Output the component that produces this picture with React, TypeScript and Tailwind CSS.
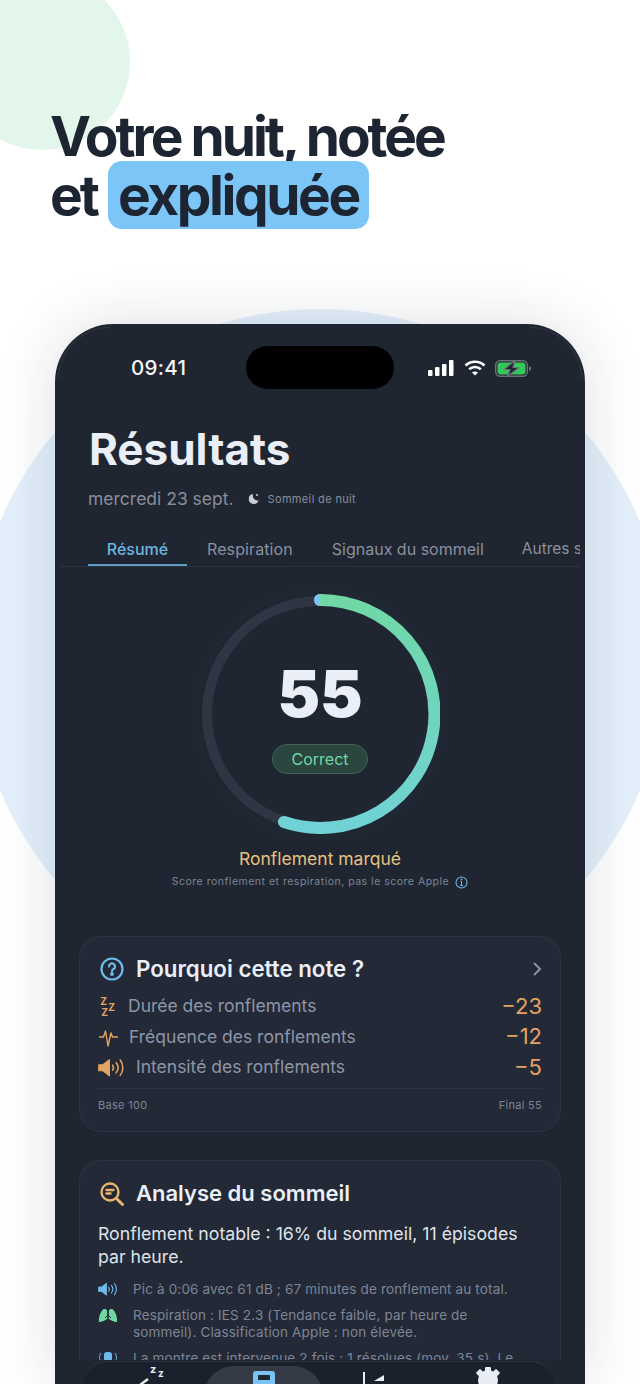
const font = "font-['Inter','Liberation_Sans',sans-serif]";

function CellBars() {
  return (
    <svg width="26" height="16" viewBox="0 0 26 16" fill="#fff">
      <rect x="0" y="10" width="4.5" height="6" rx="1" />
      <rect x="7" y="7" width="4.5" height="9" rx="1" />
      <rect x="14" y="4" width="4.5" height="12" rx="1" />
      <rect x="21" y="0" width="4.5" height="16" rx="1" />
    </svg>
  );
}

function WifiGlyph() {
  return (
    <svg width="22" height="16" viewBox="0 0 22 16" fill="none" stroke="#fff" strokeWidth="2.6">
      <path d="M1.5 5.5c5.400-5 13.600-5 19 0" />
      <path d="M5.200 9.200c3.300-3 8.300-3 11.600 0" />
      <path d="M11 15.600l-3-3c1.700-1.500 4.300-1.500 6 0z" fill="#fff" stroke="none" />
    </svg>
  );
}

function BatteryCharging() {
  return (
    <svg width="37" height="17" viewBox="0 0 37 17">
      <rect x="0.700" y="0.700" width="31.600" height="15.600" rx="4.500" fill="none" stroke="#6b7278" strokeWidth="1.400" />
      <rect x="2.500" y="2.500" width="28" height="12" rx="3" fill="#34c759" />
      <path d="M34 6v5c1.400-.4 2.200-1.400 2.200-2.500S35.400 6.400 34 6z" fill="#6b7278" />
      <path d="M20 0.500 9 9.500h6L12.500 16.500 24 7.500h-6z" fill="#1f2531" stroke="#6b7278" strokeWidth="1.200" strokeLinejoin="round" />
    </svg>
  );
}

function SpeakerWaves({ color, size }: { color: string; size: number }) {
  return (
    <svg width={size} height={size * 0.72} viewBox="0 0 26 19" fill="none">
      <path d="M0.500 6.500h4L11 1.500v16l-6.500-5h-4z" fill={color} stroke={color} strokeLinejoin="round" />
      <path d="M14 7c1.200 1.500 1.200 3.500 0 5M17.500 4.500c2.400 3 2.400 7 0 10M21.500 2c3.400 4.300 3.400 10.700 0 15" stroke={color} strokeWidth="1.500" strokeLinecap="round" />
    </svg>
  );
}

function ScoreRing() {
  return (
    <svg width="240" height="240" viewBox="0 0 240 240" className="block">
      <defs>
        <linearGradient id="arc" x1="0" y1="0" x2="0" y2="1">
          <stop offset="0" stopColor="#6fd8a5" />
          <stop offset="1" stopColor="#70d2d6" />
        </linearGradient>
      </defs>
      <circle cx="120" cy="120" r="113" fill="none" stroke="#2f3542" strokeWidth="10" />
      <path
        d="M120 6A114 114 0 1 1 84 228"
        fill="none"
        stroke="url(#arc)"
        strokeWidth="12"
        strokeLinecap="round"
      />
      <path d="M120 0A6 6 0 0 0 120 12z" fill="#7cc3f5" />
    </svg>
  );
}

function WhyRow({ icon, label, value, gap }: { icon: React.ReactNode; label: string; value: string; gap: string }) {
  return (
    <div className="flex h-[30.500px] items-center justify-between">
      <div className={`flex items-center ${gap}`}>
        {icon}
        <span className="text-[17.500px] text-[#8e96a6]">{label}</span>
      </div>
      <span className="text-[22px] text-[#e3a362]">{value}</span>
    </div>
  );
}

function NavIcons() {
  return (
    <div className="absolute bottom-0 left-[84px] h-[23px] w-[470px] overflow-hidden rounded-t-[34px] border-t border-[#2c3340] bg-[#1b212c]">
      <div className="absolute left-[120px] top-[4px] h-[40px] w-[119px] rounded-t-[30px] bg-[#343a46]" />
      <svg className="absolute left-[52px] top-[2px]" width="32" height="21" viewBox="0 0 32 21" fill="none">
        <path d="M4 21l8-6" stroke="#e8ecf4" strokeWidth="2.500" />
        <text x="14" y="9" fontSize="11" fontWeight="700" fill="#e8ecf4">z</text>
        <text x="22" y="13" fontSize="10" fontWeight="700" fill="#e8ecf4">z</text>
      </svg>
      <div className="absolute left-[169px] top-[9px] h-[20px] w-[22px] rounded-[3px] bg-[#7cc3f5]">
        <div className="mx-[5px] mt-[4px] h-[5px] rounded-[1px] bg-[#1f2531]" />
      </div>
      <div className="absolute left-[279px] top-[10px] h-[14px] w-[2px] bg-[#e8ecf4]" />
      <svg className="absolute left-[287px] top-[13px]" width="14" height="10" viewBox="0 0 14 10" fill="#e8ecf4">
        <path d="M13 0v6H3z" />
      </svg>
      <svg className="absolute left-[391px] top-[5px]" width="26" height="20" viewBox="0 0 26 20" fill="#e8ecf4">
        <circle cx="13" cy="13" r="10" />
        <rect x="10" y="0" width="6" height="6" rx="1" />
        <rect x="2" y="3" width="6" height="6" rx="1" transform="rotate(-45 5 6)" />
        <rect x="18" y="3" width="6" height="6" rx="1" transform="rotate(45 21 6)" />
      </svg>
    </div>
  );
}

export default function App() {
  return (
    <div className={`relative h-[1384px] w-[640px] overflow-hidden bg-white ${font}`}>
      <div className="absolute -left-[46px] -top-[26px] h-[176px] w-[176px] rounded-full bg-[#e2f6ec]" />
      <div className="absolute -left-[27px] top-[309px] h-[694px] w-[694px] rounded-full bg-[#e3f0fb]" />

      <div className="relative px-[50px] pt-[105px]">
        <h1 className="text-[55px] font-bold leading-[62px] tracking-[-3px] text-[#1d2432]">
          <div className="-mb-[6px]">Votre nuit, notée</div>
          <div className="flex items-center">
            et
            <span className="ml-[11px] inline-flex h-[68px] items-center rounded-[14px] bg-[#7cc6f7] px-[10px] tracking-[-2.400px]">expliquée</span>
          </div>
        </h1>
      </div>

      <div className="absolute left-[55px] top-[324px] h-[1060px] w-[530px] overflow-hidden rounded-t-[58px] bg-[#1f2531] shadow-[0_0_60px_rgba(20,30,50,0.14)]">
        {/* liseré du bord, visible seulement dans les coins */}
        <div className="absolute left-[3px] top-[3px] h-[52px] w-[52px] rounded-tl-[55px] border-l border-t border-[#2f3644]" />
        <div className="absolute right-[3px] top-[3px] h-[52px] w-[52px] rounded-tr-[55px] border-r border-t border-[#2f3644]" />

        <div className="relative flex h-[65px] items-end justify-between pb-[6px] pl-[76px] pr-[53px]">
          <span className="text-[20.500px] font-medium leading-[30px] tracking-[0.3px] text-[#f3f5f8]">09:41</span>
          <div className="absolute left-[191px] top-[22px] h-[43px] w-[148px] rounded-full bg-black" />
          <div className="flex h-[30px] items-center">
            <CellBars />
            <span className="ml-[10px]"><WifiGlyph /></span>
            <span className="ml-[9px]"><BatteryCharging /></span>
          </div>
        </div>

        <div className="pl-[34px]">
          <h2 className="mt-[32px] text-[44px] font-bold leading-[56px] text-[#e9eef7]">Résultats</h2>
          <div className="mt-[8px] flex h-[28px] items-center -translate-x-[1px]">
            <span className="text-[17.500px] text-[#878e9c]">mercredi 23 sept.</span>
            <svg className="ml-[12px]" width="14" height="14" viewBox="0 0 14 14" fill="#c9ced7">
              <path d="M7 2a5 5 0 1 0 5.500 6.500A5 5 0 0 1 7 2z" />
              <circle cx="11" cy="3" r="1" />
            </svg>
            <span className="ml-[8px] text-[11px] tracking-[0.35px] text-[#878e9c]">Sommeil de nuit</span>
          </div>
        </div>

        <div className="relative mx-[5px] mt-[17px] flex h-[37px] overflow-hidden border-b border-[#2b3240] pl-[28px]">
          <div className="relative w-[99px] shrink-0 text-center text-[16px] font-medium leading-[38px] text-[#6eb4e0]">
            Résumé
            <div className="absolute bottom-0 left-0 h-[2px] w-full bg-[#5f9cc4]" />
          </div>
          <span className="ml-[20px] shrink-0 whitespace-nowrap text-[16px] leading-[38px] tracking-[0.1px] text-[#8a919f]">Respiration</span>
          <span className="ml-[39px] shrink-0 whitespace-nowrap text-[16px] leading-[38px] text-[#8a919f]">Signaux du sommeil</span>
          <span className="ml-[38px] shrink-0 whitespace-nowrap text-[15.500px] leading-[38px] text-[#8a919f]">Autres signaux</span>
        </div>

        <div className="relative mx-auto mt-[27px] h-[240px] w-[240px] rounded-full shadow-[0_0_50px_rgba(110,216,190,0.04)]">
          <ScoreRing />
          <div className="absolute inset-0 flex flex-col items-center">
            <span className="mt-[60px] text-[64px] font-black leading-[80px] text-[#eaeef7]">55</span>
            <span className="mt-[10px] flex h-[30px] w-[96px] items-center justify-center rounded-full border border-[#3f6458] bg-[#2b463f] text-[16px] text-[#6fd8a5]">
              Correct
            </span>
          </div>
        </div>

        <div className="mt-[12px] text-center text-[17.500px] leading-[26px] text-[#e5c27f]">Ronflement marqué</div>
        <div className="mt-[2px] flex items-center justify-center gap-[6px] text-[10.500px] leading-[16px] tracking-[0.5px] text-[#7d8596]">
          Score ronflement et respiration, pas le score Apple
          <svg width="13" height="13" viewBox="0 0 13 13" fill="none" stroke="#6eb4e0" strokeWidth="1.100">
            <circle cx="6.500" cy="6.500" r="5.500" />
            <path d="M6.500 5.500v4M5 9.500h3M5.500 5.500h1" />
            <circle cx="6.500" cy="3.500" r="0.400" />
          </svg>
        </div>

        <div className="mx-[24px] mt-[46px] h-[196px] rounded-[22px] border border-[#2e3542] bg-[#232936] px-[18px]">
          <div className="flex h-[54px] items-center justify-between pt-[10px]">
            <div className="flex items-center gap-[12px]">
              <svg className="ml-[2px]" width="24" height="24" viewBox="0 0 24 24" fill="none" stroke="#6fbcec" strokeWidth="2.200">
                <circle cx="12" cy="12" r="10.500" />
                <path d="M9 9.500a3 3 0 1 1 4.500 2.600c-1 .5-1.500 1-1.500 2" strokeLinecap="round" />
                <circle cx="12" cy="17" r="0.800" fill="#6fbcec" />
              </svg>
              <span className="text-[22.300px] font-semibold text-[#eaeef7]">Pourquoi cette note ?</span>
            </div>
            <svg width="12" height="16" viewBox="0 0 12 16" fill="none" stroke="#8a919f" strokeWidth="2" className="mr-[-1px]">
              <path d="M3 2l6 6-6 6" />
            </svg>
          </div>
          <WhyRow
            gap="gap-[10px]"
            value="−23"
            label="Durée des ronflements"
            icon={
              <span className="relative block h-[22px] w-[20px] text-[13px] font-medium leading-none text-[#e3a362]">
                <span className="absolute left-[2px] top-[-1px]">z</span>
                <span className="absolute left-[10px] top-[5px]">z</span>
                <span className="absolute left-[3px] top-[10px]">z</span>
              </span>
            }
          />
          <WhyRow
            gap="gap-[10px]"
            value="−12"
            label="Fréquence des ronflements"
            icon={
              <svg width="21" height="24" viewBox="0 0 21 24" fill="none" stroke="#e3a362" strokeWidth="1.400" strokeLinejoin="round">
                <path d="M1 12h4.500l2-6 2.500 15 3-13 1.500 4H20" />
              </svg>
            }
          />
          <WhyRow gap="gap-[11px]" value="−5" label="Intensité des ronflements" icon={<SpeakerWaves color="#e3a362" size={27} />} />
          <div className="mt-[5px] flex h-[34px] items-center justify-between border-t border-[#2e3542] text-[11px] tracking-[0.3px] text-[#7d8596]">
            <span>Base 100</span>
            <span>Final 55</span>
          </div>
        </div>

        <div className="mx-[24px] mt-[28px] h-[260px] rounded-[22px] border border-[#2e3542] bg-[#232936] px-[18px]">
          <div className="flex h-[64px] items-center gap-[12px] pt-[1px]">
            <svg className="ml-[2px]" width="24" height="24" viewBox="0 0 24 24" fill="none">
              <circle cx="10" cy="10" r="8.500" stroke="#e8b46d" strokeWidth="2.400" />
              <path d="M16.500 16.500l6 6" stroke="#e8b46d" strokeWidth="3" strokeLinecap="round" />
              <path d="M6.500 8h7M6.500 11.500h4" stroke="#e8b46d" strokeWidth="2.400" strokeLinecap="round" />
            </svg>
            <span className="text-[22px] font-semibold text-[#eaeef7]">Analyse du sommeil</span>
          </div>
          <p className="-mt-[3px] text-[17.700px] leading-[23px] text-[#dfe3ea]">
            Ronflement notable : 16% du sommeil, 11 épisodes par heure.
          </p>
          <div className="mt-[13px] flex items-start gap-[15px] pr-[20px] text-[13.500px] leading-[17px] tracking-[0.15px] text-[#7d8596]">
            <span className="mt-[1px] block w-[20px] shrink-0">
              <SpeakerWaves color="#6fbcec" size={20} />
            </span>
            <span>Pic à 0:06 avec 61 dB ; 67 minutes de ronflement au total.</span>
          </div>
          <div className="mt-[9px] flex items-start gap-[15px] pr-[20px] text-[13.500px] leading-[17px] tracking-[0.15px] text-[#7d8596]">
            <svg className="mt-[1px] shrink-0" width="20" height="15" viewBox="0 0 20 15">
              <path d="M1 14c-.5-5 1.500-10 4-12.500 1.500-1 3.500-.5 4.200 1.500V11c-2 1.500-5.200 3-8.200 3zM19 14c.5-5-1.500-10-4-12.500-1.500-1-3.500-.5-4.200 1.500V11c2 1.500 5.200 3 8.200 3z" fill="#6fd8a5" />
              <path d="M10 1v6M10 7l-3 3M10 7l3 3" stroke="#232936" strokeWidth="1" fill="none" />
            </svg>
            <span>Respiration : IES 2.3 (Tendance faible, par heure de sommeil). Classification Apple : non élevée.</span>
          </div>
          <div className="mt-[9px] flex items-start gap-[15px] pr-[20px] text-[13.500px] leading-[17px] tracking-[0.15px] text-[#7d8596]">
            <svg className="mt-[1px] shrink-0" width="20" height="15" viewBox="0 0 20 15" fill="none">
              <rect x="6" y="1" width="8" height="10" rx="3" fill="#6fbcec" />
              <path d="M3 2c-2 3-2 6 0 9M17 2c2 3 2 6 0 9" stroke="#6fbcec" />
            </svg>
            <span className="whitespace-nowrap">La montre est intervenue 2 fois : 1 résolues (moy. 35 s). Le</span>
          </div>
        </div>
      </div>

      <div className="absolute bottom-0 left-[55px] h-[24px] w-[530px] bg-[#1f2531]" />
      <NavIcons />
    </div>
  );
}
